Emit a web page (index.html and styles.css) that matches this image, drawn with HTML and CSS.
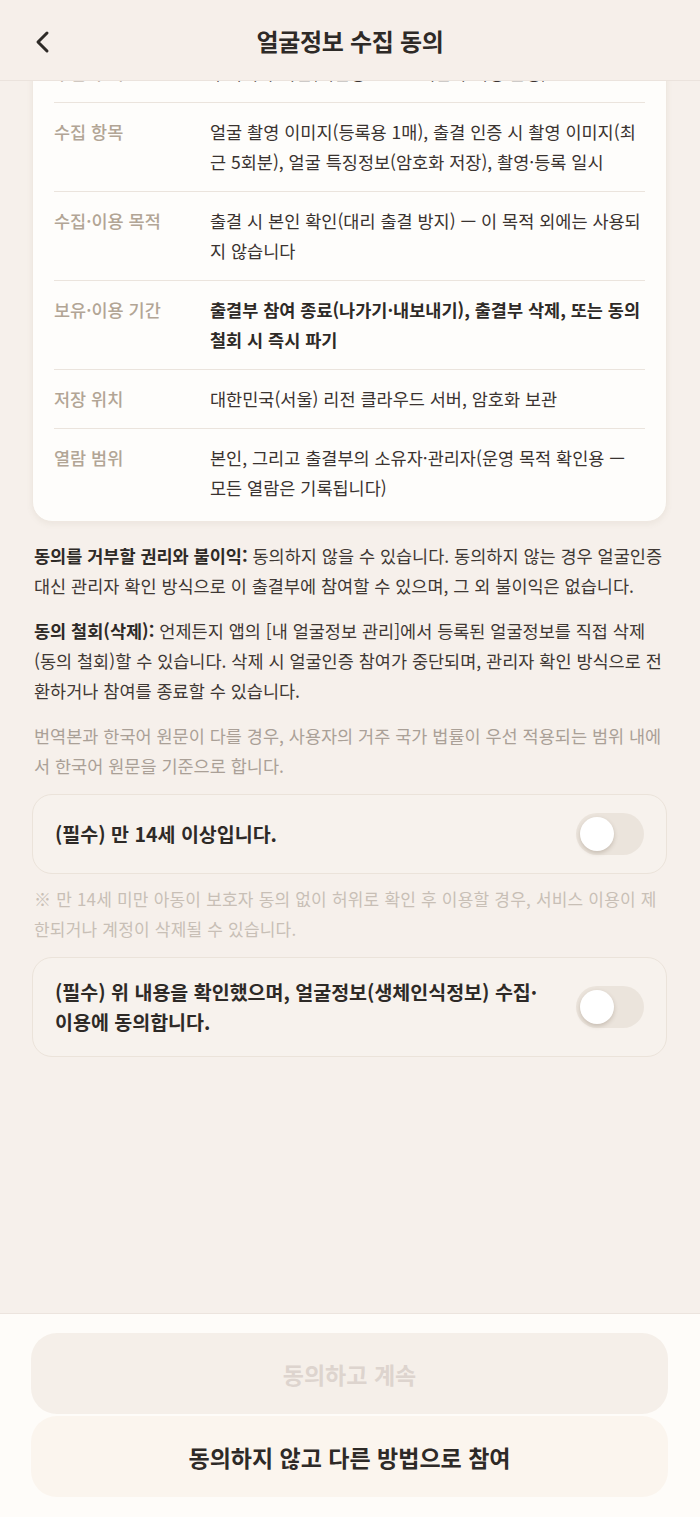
FILE: index.html
```html
<!DOCTYPE html>
<html lang="ko">
<head>
    <meta charset="UTF-8">
    <meta name="viewport" content="width=device-width, initial-scale=1.0">
    <title>얼굴정보 수집 동의</title>
    <link rel="stylesheet" href="styles.css">
</head>
<body>
    <header class="topbar">
        <button class="back" aria-label="뒤로">
            <svg width="20" height="24" viewBox="0 0 20 24"><path d="M15 3 L6 12 L15 21" fill="none" stroke="#2e2a27" stroke-width="3" stroke-linecap="round" stroke-linejoin="round"/></svg>
        </button>
        <h1>얼굴정보 수집 동의</h1>
    </header>

    <main class="content">
        <!-- scrolled: the top of the card sits under the header -->
        <div class="info-card scrolled">
            <div class="info-row">
                <span class="info-label">수집 주체</span>
                <span class="info-value">주식회사 리전(개인정보 보호책임자 지정 운영)</span>
            </div>
            <div class="info-row">
                <span class="info-label">수집 항목</span>
                <span class="info-value">얼굴 촬영 이미지(등록용 1매), 출결 인증 시 촬영 이미지(최근 5회분), 얼굴 특징정보(암호화 저장), 촬영·등록 일시</span>
            </div>
            <div class="info-row">
                <span class="info-label">수집·이용 목적</span>
                <span class="info-value">출결 시 본인 확인(대리 출결 방지) — 이 목적 외에는 사용되지 않습니다</span>
            </div>
            <div class="info-row">
                <span class="info-label">보유·이용 기간</span>
                <span class="info-value strong">출결부 참여 종료(나가기·내보내기), 출결부 삭제, 또는 동의 철회 시 즉시 파기</span>
            </div>
            <div class="info-row">
                <span class="info-label">저장 위치</span>
                <span class="info-value">대한민국(서울) 리전 클라우드 서버, 암호화 보관</span>
            </div>
            <div class="info-row">
                <span class="info-label">열람 범위</span>
                <span class="info-value">본인, 그리고 출결부의 소유자·관리자(운영 목적 확인용 — 모든 열람은 기록됩니다)</span>
            </div>
        </div>

        <p class="notice"><strong>동의를 거부할 권리와 불이익:</strong> 동의하지 않을 수 있습니다. 동의하지 않는 경우 얼굴인증 대신 관리자 확인 방식으로 이 출결부에 참여할 수 있으며, 그 외 불이익은 없습니다.</p>
        <p class="notice"><strong>동의 철회(삭제):</strong> 언제든지 앱의 [내 얼굴정보 관리]에서 등록된 얼굴정보를 직접 삭제(동의 철회)할 수 있습니다. 삭제 시 얼굴인증 참여가 중단되며, 관리자 확인 방식으로 전환하거나 참여를 종료할 수 있습니다.</p>
        <p class="notice muted">번역본과 한국어 원문이 다를 경우, 사용자의 거주 국가 법률이 우선 적용되는 범위 내에서 한국어 원문을 기준으로 합니다.</p>

        <label class="agree-card">
            <span class="agree-text">(필수) 만 14세 이상입니다.</span>
            <input type="checkbox" class="switch-input">
            <span class="switch"></span>
        </label>
        <p class="hint">※ 만 14세 미만 아동이 보호자 동의 없이 허위로 확인 후 이용할 경우, 서비스 이용이 제한되거나 계정이 삭제될 수 있습니다.</p>

        <label class="agree-card">
            <span class="agree-text">(필수) 위 내용을 확인했으며, 얼굴정보(생체인식정보) 수집·이용에 동의합니다.</span>
            <input type="checkbox" class="switch-input">
            <span class="switch"></span>
        </label>
    </main>

    <footer class="actions">
        <button class="btn btn-primary" disabled>동의하고 계속</button>
        <button class="btn btn-secondary">동의하지 않고 다른 방법으로 참여</button>
    </footer>
</body>
</html>
```

FILE: styles.css
```css
* {
    box-sizing: border-box;
}
body {
    margin: 0;
    height: 100vh;
    display: flex;
    flex-direction: column;
    font-family: "Noto Sans CJK KR", "Noto Sans", sans-serif;
    color: #3a3330;
    background-color: #f6f0eb;
}
.topbar {
    position: relative;
    flex: 0 0 81px;
    display: flex;
    align-items: center;
    justify-content: center;
    background: #f6efea;
    border-bottom: 1px solid #ebe3dd;
    z-index: 2;
}
.topbar h1 {
    margin: 0;
    font-size: 24px;
    font-weight: 700;
    color: #2e2a27;
    letter-spacing: -0.3px;
}
.back {
    position: absolute;
    left: 26px;
    top: 28px;
    padding: 0;
    border: none;
    background: none;
    width: 32px;
    height: 28px;
    display: flex;
    align-items: center;
    justify-content: center;
}
.content {
    flex: 1;
    min-height: 0;
    overflow: hidden;
    padding: 0 33px 24px 32px;
}
.info-card {
    background: #fefdfb;
    border: 1px solid #efe8e1;
    border-radius: 20px;
    padding: 6px 21px 4px;
    box-shadow: 0 2px 6px rgba(120, 100, 80, 0.08);
}
.info-card.scrolled {
    margin-top: -44px;
}
.info-row {
    display: flex;
    padding: 14px 0;
    border-bottom: 1px solid #ebe4dd;
    font-size: 17.5px;
    line-height: 30px;
}
.info-row:last-child {
    border-bottom: none;
}
.info-label {
    flex: 0 0 156px;
    color: #b2a595;
    font-weight: 500;
}
.info-value {
    flex: 1;
    color: #3a3330;
}
.info-value.strong {
    font-weight: 700;
    color: #2e2a27;
}
.notice {
    margin: 15px 2px 0;
    font-size: 17.5px;
    line-height: 30px;
    color: #3f3834;
}
.info-card + .notice {
    margin-top: 19px;
}
.notice strong {
    color: #2e2a27;
}
.notice.muted {
    margin-top: 15px;
    color: #aaa097;
}
.agree-card {
    display: flex;
    align-items: center;
    gap: 32px;
    margin-top: 13px;
    padding: 18px 22px;
    border: 1px solid #ebe3da;
    border-radius: 20px;
    background: #f7f2ed;
}
.agree-text {
    flex: 1;
    font-size: 19.5px;
    font-weight: 700;
    line-height: 30px;
    color: #2e2a27;
}
.switch-input {
    display: none;
}
.switch {
    position: relative;
    flex: 0 0 68px;
    height: 42px;
    border-radius: 21px;
    background: #ebe4dc;
}
.switch::after {
    content: "";
    position: absolute;
    left: 4px;
    top: 4px;
    width: 34px;
    height: 34px;
    border-radius: 50%;
    background: #fff;
    box-shadow: 0 2px 4px rgba(90, 70, 50, 0.25);
}
.hint {
    margin: 10px 2px 0;
    font-size: 17px;
    line-height: 30px;
    letter-spacing: 0.2px;
    color: #c8bfb6;
}
.agree-card + .hint + .agree-card {
    margin-top: 13px;
    padding: 19px 22px;
}
.actions {
    flex: 0 0 204px;
    display: flex;
    flex-direction: column;
    gap: 2px;
    padding: 19px 32px 20px 31px;
    background: #fefcf9;
    border-top: 1px solid #ece4de;
}
.btn {
    height: 81px;
    border: none;
    border-radius: 26px;
    font-family: inherit;
    font-size: 23px;
    font-weight: 700;
}
.btn-primary {
    background: #f5efe9;
    color: #ddd4ce;
}
.btn-secondary {
    background: #fbf5ee;
    color: #2e2a27;
}
```
